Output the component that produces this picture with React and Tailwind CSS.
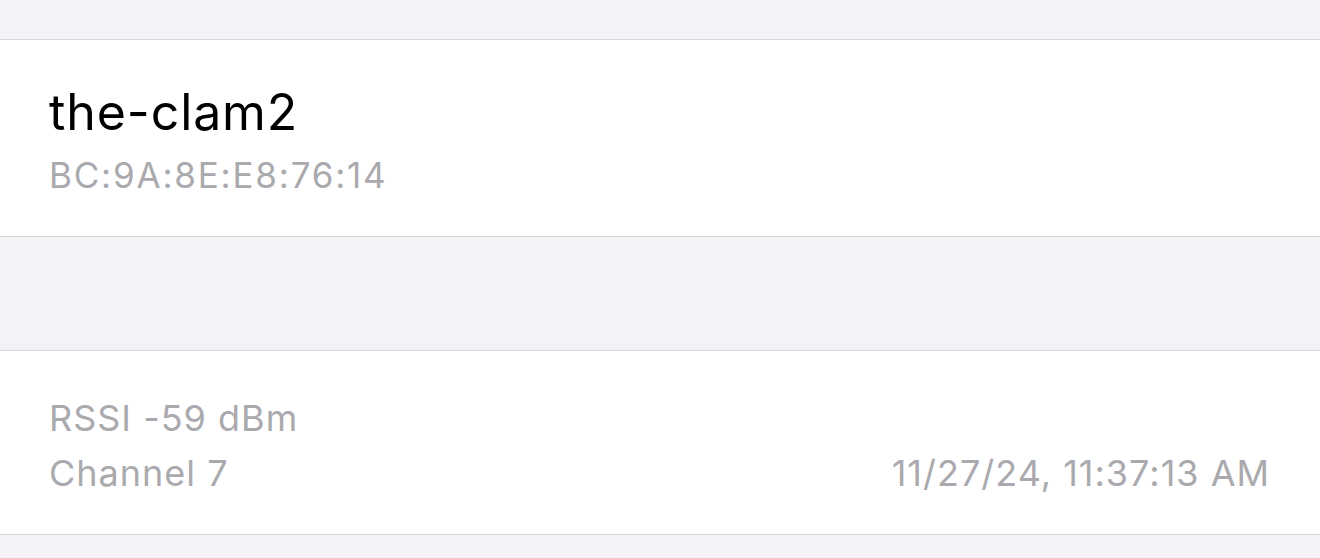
import React from 'react';

const device = {
  name: 'the-clam2',
  mac: 'BC:9A:8E:E8:76:14',
  rssi: -59,
  channel: 7,
  seen: '11/27/24, 11:37:13 AM',
};

const App = () => {
  return (
    <div
      className="min-h-[558px] bg-[#f2f2f7] flex flex-col"
      style={{ fontFamily: 'Inter, "Liberation Sans", sans-serif' }}
    >
      <div className="h-[39px]" />

      <section className="bg-white border-y border-[#d6d6da] pl-[49px] pr-[50px] pt-[42px] pb-[39px]">
        <h1 className="text-[50px] leading-[60px] tracking-[0.9px] text-black">{device.name}</h1>
        <p className="mt-[11px] text-[35px] leading-[44px] tracking-[1.8px] text-[#aaaaae]">{device.mac}</p>
      </section>

      <div className="h-[113px]" />

      <section className="bg-white border-y border-[#d6d6da] pl-[49px] pr-[50px] pt-[40px] pb-[33px] text-[36px] leading-[55px] tracking-[1px] text-[#aaaaae]">
        <p>RSSI {device.rssi} dBm</p>
        <div className="flex justify-between">
          <span>Channel {device.channel}</span>
          <span>{device.seen}</span>
        </div>
      </section>
    </div>
  );
};

export default App;
